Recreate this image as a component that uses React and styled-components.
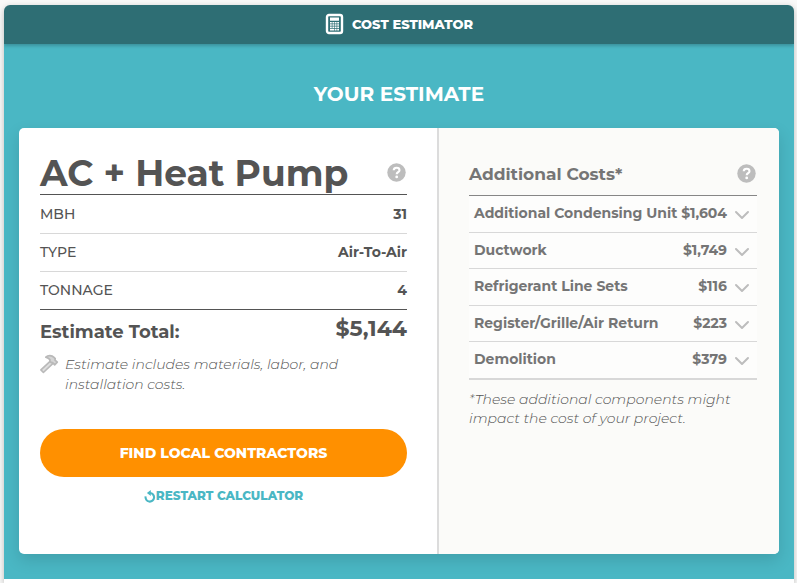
import React from "react";
import styled, { createGlobalStyle } from "styled-components";

const GlobalStyle = createGlobalStyle`
  * { box-sizing: border-box; }
  body {
    margin: 0;
    background: #f9f9f8;
    font-family: Montserrat, Inter, sans-serif;
    color: #545454;
  }
  button { font-family: inherit; cursor: pointer; }
`;

const Widget = styled.main`
  margin: 5px 3px 0 4px;
  padding-bottom: 4px;
  border-radius: 6px 6px 0 0;
  background: #fff;
  box-shadow: 0 2px 6px rgba(0, 0, 0, 0.25);
  overflow: hidden;
`;

const Header = styled.header`
  position: relative;
  display: flex;
  align-items: center;
  justify-content: center;
  gap: 8px;
  height: 39px;
  padding-bottom: 1px;
  background: #2e6e74;
  color: #fff;
  box-shadow: 0 2px 3px rgba(0, 0, 0, 0.2);
`;

const HeaderTitle = styled.h1`
  margin: 0;
  font-size: 13px;
  line-height: 20px;
  font-weight: 800;
`;

const Body = styled.div`
  padding: 38px 15px 25px;
  background: #4ab7c4;
`;

const Heading = styled.h2`
  margin: 0 0 22px;
  text-align: center;
  font-size: 20px;
  line-height: 24px;
  font-weight: 700;
  color: #fff;
`;

const Panels = styled.div`
  display: grid;
  grid-template-columns: 21fr 17fr;
  border-radius: 5px;
  background: #fff;
  box-shadow: 0 6px 16px rgba(0, 0, 0, 0.13);
  overflow: hidden;
`;

const EstimatePanel = styled.section`
  padding: 23px 30px 48px 21px;
  border-right: 2px solid #dcdcdc;
`;

const CostsPanel = styled.section`
  padding: 32px 22px 48px 30px;
  background: #fbfbf9;
  color: #757575;
`;

const TitleRow = styled.div`
  display: flex;
  align-items: center;
  justify-content: space-between;
  height: ${(p) => (p.$large ? 43 : 36)}px;
  padding-bottom: ${(p) => (p.$large ? 0 : 8)}px;
  border-bottom: ${(p) => (p.$large ? "0" : "1px solid #868686")};
`;

const SystemName = styled.h3`
  margin: 0;
  font-size: 36px;
  line-height: 44px;
  font-weight: 700;
  white-space: nowrap;
`;

const CostsTitle = styled.h3`
  margin: 0;
  font-size: 17px;
  line-height: 28px;
  font-weight: 700;
`;

const HelpButton = styled.button`
  display: flex;
  padding: 0 1px;
  border: 0;
  background: none;
  color: #bdbdbd;
`;

const SpecTable = styled.table`
  width: 100%;
  border-collapse: collapse;
  border-top: 1px solid #545454;
  border-bottom: 1px solid #545454;
  font-size: 14px;
  line-height: 20px;

  th, td {
    height: 38px;
    padding: 0 0 1px;
  }
  tr:first-child th, tr:first-child td {
    height: 39px;
  }
  th {
    text-align: left;
    font-weight: 500;
  }
  td {
    text-align: right;
    font-weight: 700;
  }
  tr + tr {
    border-top: 1px solid #d8d8d8;
  }
`;

const TotalRow = styled.div`
  display: flex;
  justify-content: space-between;
  margin-top: 6px;
`;

const TotalLabel = styled.span`
  padding-top: 4px;
  font-size: 18px;
  line-height: 24px;
  font-weight: 700;
`;

const TotalValue = styled.strong`
  font-size: 22px;
  line-height: 26px;
  font-weight: 700;
`;

const Note = styled.div`
  display: flex;
  gap: 6px;
  margin-top: 10px;
  padding-right: 50px;
  font-size: 14px;
  line-height: 20px;
  font-weight: 300;
  font-style: italic;
  color: #545454;

  svg { flex: none; }
`;

const PrimaryButton = styled.button`
  display: block;
  width: 100%;
  height: 48px;
  margin-top: 35px;
  padding: 0 0 1px;
  border: 0;
  border-radius: 24px;
  background: #ff9000;
  color: #fff;
  font-size: 14px;
  font-weight: 800;
`;

const RestartButton = styled.button`
  display: flex;
  align-items: center;
  margin: 8px auto 0;
  padding: 0;
  border: 0;
  background: none;
  color: #4ab7c4;
  font-size: 12px;
  line-height: 21px;
  font-weight: 800;
`;

const CostList = styled.ul`
  margin: 0;
  padding: 0;
  list-style: none;
  border-bottom: 1px solid #d8d8d8;
`;

const CostItem = styled.li`
  height: 37px;
  border-bottom: 1px solid #d8d8d8;
  background: #fdfdfc;

  &:nth-child(even) { height: 36px; }
`;

const CostButton = styled.button`
  display: flex;
  align-items: center;
  width: 100%;
  height: 100%;
  padding: 0 7px 2px 5px;
  border: 0;
  background: none;
  color: inherit;
  font-size: 14px;
  line-height: 20px;
  font-weight: 700;
  white-space: nowrap;

  svg { flex: none; margin: 4px 0 0 7px; }
`;

const CostAmount = styled.span`
  margin-left: auto;
`;

const Footnote = styled.p`
  margin: 10px 0 0;
  font-size: 14px;
  line-height: 19px;
  font-weight: 300;
  font-style: italic;
  color: #545454;
`;

const CalculatorIcon = () => (
  <svg width="19" height="22" viewBox="0 0 19 22" aria-hidden="true">
    <rect x="2" y="2" width="15" height="18" rx="2" fill="none" stroke="currentColor" strokeWidth="2.4" />
    <path fill="currentColor" d="M5 4.5h9v3.3H5zM5 9h1.8v1.5H5zM7.4 9h1.8v1.5H7.4zM9.8 9h1.8v1.5H9.8zM12.2 9H14v1.5h-1.8zM5 11.3h1.8v1.5H5zM7.4 11.3h1.8v1.5H7.4zM9.8 11.3h1.8v1.5H9.8zM12.2 11.3H14v1.5h-1.8zM5 13.6h1.8v1.4H5zM7.4 13.6h1.8v1.4H7.4zM9.8 13.6h1.8v1.4H9.8zM12.2 13.6H14v1.4h-1.8zM5 15.8h4.2v1.6H5zM9.8 15.8h1.8v1.6H9.8zM12.2 15.8H14v1.6h-1.8z" />
  </svg>
);

const HelpIcon = () => (
  <svg width="19" height="19" viewBox="0 0 19 19" fill="none" aria-hidden="true">
    <circle cx="9.5" cy="9.5" r="9.2" fill="currentColor" />
    <path d="M6.7 7.3C6.8 5.6 8 4.8 9.6 4.8c1.7 0 2.9.9 2.9 2.4 0 2-2.8 2-2.8 4" stroke="#fff" strokeWidth="2.1" />
    <circle cx="9.7" cy="13.9" r="1.4" fill="#fff" />
  </svg>
);

const HammerIcon = () => (
  <svg width="19" height="20" viewBox="0 0 19 20" fill="none" stroke="#b9b9b9" strokeLinejoin="round" aria-hidden="true">
    <path d="M10.6 6.8.9 15.9l2.5 2.6 9.6-9.1z" fill="#dedede" strokeWidth="1.6" />
    <path d="M5.8 3.1C8 1.2 11.8 1.2 14 3.4l1.2 1.3-.2 1.4 2.3 2.1-2.6 2.6-2.1-2.2-1.3.1-1.4-1.5.1-1.4C8.9 4.2 7.8 3.6 5.8 3.1z" fill="#d5d5d5" strokeWidth="1.7" />
  </svg>
);

const RestartIcon = () => (
  <svg width="12" height="14" viewBox="0 0 12 14" fill="none" aria-hidden="true">
    <path d="M1.6 7.4A4.3 4.3 0 1 0 6 4" stroke="currentColor" strokeWidth="2.1" />
    <path d="M2.9 4 6.8 1v6z" fill="currentColor" />
  </svg>
);

const ChevronIcon = () => (
  <svg width="16" height="10" viewBox="0 0 16 10" fill="none" stroke="#bdbdbd" strokeWidth="2" strokeLinecap="round" strokeLinejoin="round" aria-hidden="true">
    <path d="m2 2 6 6 6-6" />
  </svg>
);

const specs = [
  ["MBH", "31"],
  ["TYPE", "Air-To-Air"],
  ["TONNAGE", "4"],
];

const costs = [
  ["Additional Condensing Unit", "$1,604"],
  ["Ductwork", "$1,749"],
  ["Refrigerant Line Sets", "$116"],
  ["Register/Grille/Air Return", "$223"],
  ["Demolition", "$379"],
];

export default function App() {
  return (
    <>
      <GlobalStyle />
      <Widget>
        <Header>
          <CalculatorIcon />
          <HeaderTitle>COST ESTIMATOR</HeaderTitle>
        </Header>
        <Body>
          <Heading>YOUR ESTIMATE</Heading>
          <Panels>
            <EstimatePanel>
              <TitleRow $large>
                <SystemName>AC + Heat Pump</SystemName>
                <HelpButton type="button" aria-label="About this system">
                  <HelpIcon />
                </HelpButton>
              </TitleRow>
              <SpecTable>
                <tbody>
                  {specs.map(([name, value]) => (
                    <tr key={name}>
                      <th scope="row">{name}</th>
                      <td>{value}</td>
                    </tr>
                  ))}
                </tbody>
              </SpecTable>
              <TotalRow>
                <TotalLabel>Estimate Total:</TotalLabel>
                <TotalValue>$5,144</TotalValue>
              </TotalRow>
              <Note>
                <HammerIcon />
                <span>Estimate includes materials, labor, and installation costs.</span>
              </Note>
              <PrimaryButton type="button">FIND LOCAL CONTRACTORS</PrimaryButton>
              <RestartButton type="button">
                <RestartIcon />
                RESTART CALCULATOR
              </RestartButton>
            </EstimatePanel>
            <CostsPanel>
              <TitleRow>
                <CostsTitle>Additional Costs*</CostsTitle>
                <HelpButton type="button" aria-label="About additional costs">
                  <HelpIcon />
                </HelpButton>
              </TitleRow>
              <CostList>
                {costs.map(([name, amount]) => (
                  <CostItem key={name}>
                    <CostButton type="button" aria-expanded="false">
                      <span>{name}</span>
                      <CostAmount>{amount}</CostAmount>
                      <ChevronIcon />
                    </CostButton>
                  </CostItem>
                ))}
              </CostList>
              <Footnote>*These additional components might impact the cost of your project.</Footnote>
            </CostsPanel>
          </Panels>
        </Body>
      </Widget>
    </>
  );
}
